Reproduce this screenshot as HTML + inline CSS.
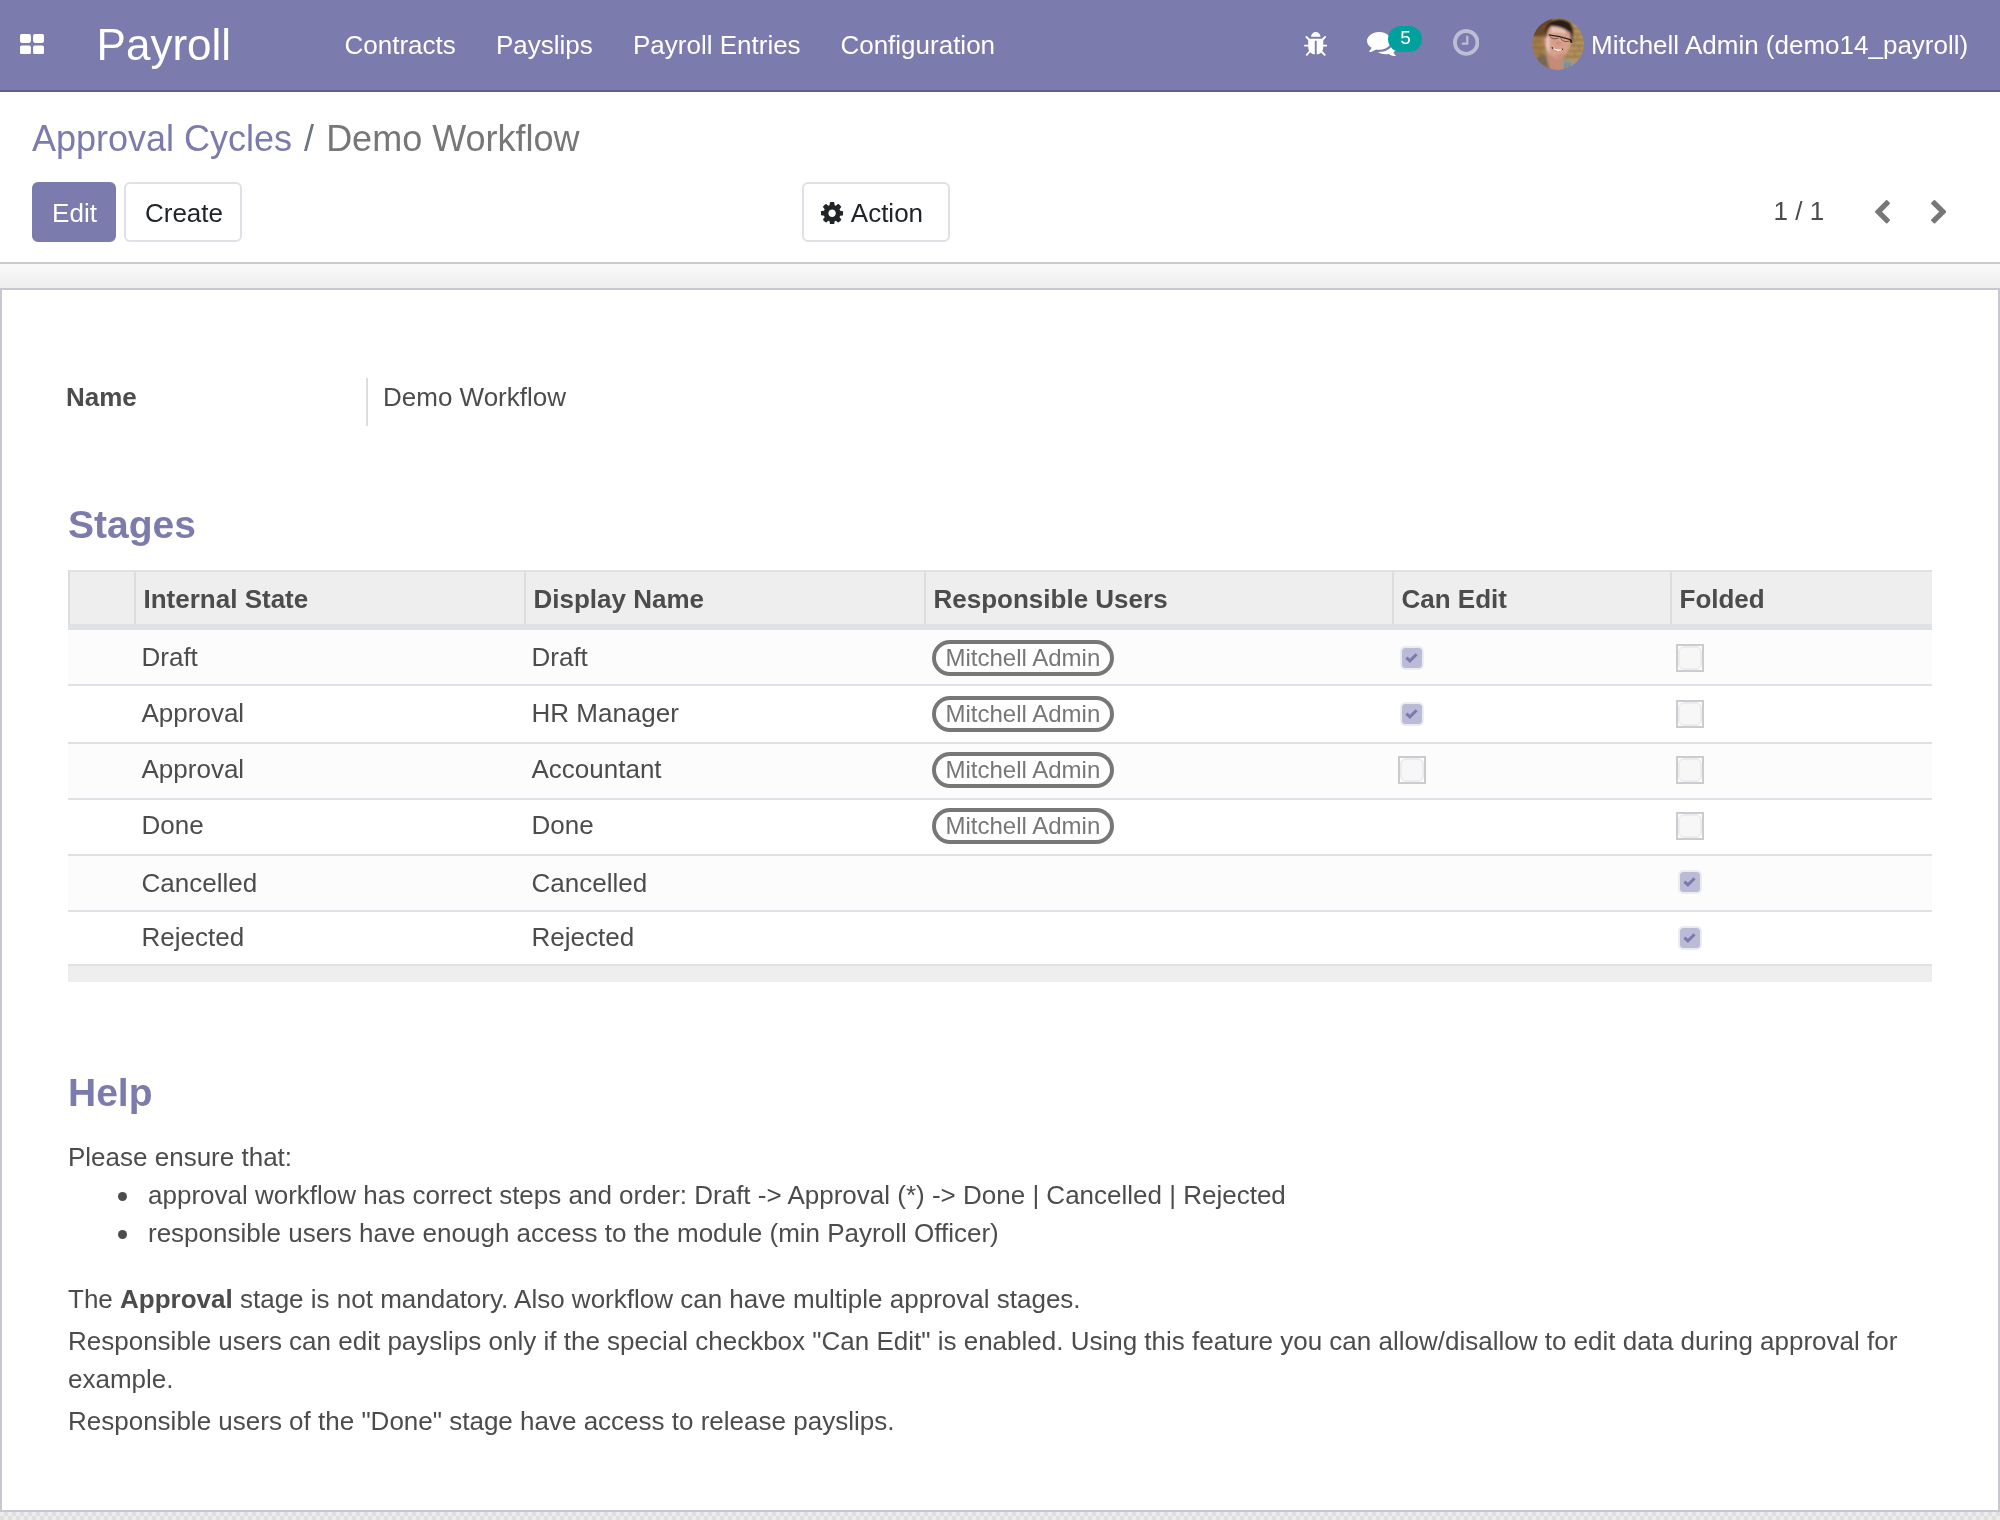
<!DOCTYPE html>
<html lang="en">
<head>
<meta charset="utf-8">
<title>Demo Workflow - Odoo</title>
<style>
*{box-sizing:border-box;margin:0;padding:0}
html,body{width:2000px;height:1520px;overflow:hidden}
body{font-family:"Liberation Sans",Arial,Helvetica,sans-serif;font-size:26px;line-height:1.5;color:#4c4c4c;background:#f0f0f0;position:relative;will-change:transform}
a{text-decoration:none;color:inherit}
svg{display:block}

/* ---------- navbar ---------- */
.navbar{position:absolute;left:0;top:0;width:2000px;height:92px;background:#7c7bad;border-bottom:2px solid #5f5e97;color:#fff}
.navbar .apps{position:absolute;left:20.2px;top:33.7px;width:24px;height:20.4px}
.navbar .brand{position:absolute;left:96.6px;top:0;height:90px;line-height:90px;font-size:44px;color:#fff;white-space:nowrap}
.navbar .menu{position:absolute;top:0;height:90px;line-height:90px;font-size:26px;color:#fff;white-space:nowrap}
.navbar .ico{position:absolute}
.navbar .badge{position:absolute;left:1388px;top:26px;width:34px;height:26px;border-radius:13px;background:#00a09d;color:#fff;font-size:19px;line-height:23px;text-align:center;padding-left:1px}
.navbar .avatar{position:absolute;left:1532px;top:18px;width:52px;height:52px;border-radius:50%;overflow:hidden}
.navbar .user{position:absolute;left:1591px;top:0;height:90px;line-height:90px;font-size:26px;white-space:nowrap}

/* ---------- control panel ---------- */
.cp{position:absolute;left:0;top:92px;width:2000px;height:172px;background:#fff;border-bottom:2px solid #cccccc}
.breadcrumb{position:absolute;left:32px;top:20px;font-size:36px;line-height:54px;white-space:nowrap;color:#777}
.breadcrumb a{color:#7c7bad}
.breadcrumb .sep{padding:0 12px 0 12px;color:#6c757d}
.btn{position:absolute;top:90px;height:60px;border-radius:6px;font-size:26px;line-height:58px;text-align:center;border:2px solid transparent;white-space:nowrap}
.btn-primary{left:32px;width:84px;padding-left:1px;background:#7c7bad;border-color:#7c7bad;color:#fff}
.btn-secondary{background:#fff;border-color:#dee2e6;color:#212529}
.btn-create{left:124px;width:118px;padding-left:2px}
.btn-action{left:802px;width:148px}
.btn-action svg{position:absolute;left:17px;top:17.5px}
.btn-action span{position:absolute;left:46.8px;top:0}
.pager{position:absolute;left:1773.5px;top:89px;height:60px;line-height:60px;font-size:26px;color:#4c4c4c;white-space:nowrap}
.pgbtn{position:absolute;top:108px}

/* ---------- sheet ---------- */
.strip{position:absolute;left:0;top:264px;width:2000px;height:24px;background:linear-gradient(#f9f9f9,#eeeeee)}
.botstrip{position:absolute;left:0;top:1512px;width:2000px;height:8px;background:repeating-conic-gradient(#dfdfdf 0% 25%,#ededed 0% 50%) 0 0/8px 8px}
.sheet{position:absolute;left:0;top:288px;width:2000px;height:1224px;background:#fff;border:2px solid #c8c8d3}
.lbl{position:absolute;left:64px;top:88px;font-weight:bold;line-height:39px;white-space:nowrap}
.vsep{position:absolute;left:364px;top:88px;width:2px;height:48px;background:#ddd}
.val{position:absolute;left:381px;top:88px;line-height:39px;white-space:nowrap}
h2{position:absolute;left:66px;font-size:39px;font-weight:bold;color:#7c7bad;line-height:48px;white-space:nowrap}

/* table */
table{position:absolute;left:66px;top:280px;width:1864px;border-collapse:separate;border-spacing:0;table-layout:fixed}
thead th{height:56px;background:#eee;text-align:left;font-weight:bold;padding:0 0 0 7.5px;border-left:2px solid #ddd;border-top:2px solid #dee2e6;border-bottom:2px solid #dee2e6;color:#4c4c4c;vertical-align:middle;line-height:38px;white-space:nowrap;padding-top:2px}
tbody td{padding:0 0 0 7.5px;border-bottom:2px solid #dee2e6;vertical-align:middle;position:relative;white-space:nowrap;line-height:38px}
tbody tr:first-child td{border-top:4px solid #dee2e6}
tbody tr:nth-child(odd) td{background:#fcfcfc}
tbody tr:nth-child(1) td{height:60px}
tbody tr:nth-child(2) td{height:58px;padding-bottom:2px}
tbody tr:nth-child(3) td{height:56px;padding-bottom:4px}
tbody tr:nth-child(4) td{height:56px;padding-bottom:4px}
tbody tr:nth-child(5) td{height:56px}
tbody tr:nth-child(6) td{height:54px;padding-bottom:2px}
tfoot td{height:16px;background:#eee}
.tag{position:relative;top:-1px;display:inline-block;height:36px;line-height:28px;border:4px solid #777;border-radius:18px;padding:0 10px;font-size:24px;color:#777;background:#fff;vertical-align:middle}
.cb{position:absolute;display:block}
.cb.on{left:8px;width:24px;height:24px;border-radius:5.5px;background:#bcbbd7;border:2px solid #e9ecf0}
.cb.on svg{position:absolute;left:2.8px;top:3.5px}
.cb.off{left:6px;width:28px;height:28px;border:2px solid #ccc;background:#fff}
.cb.off i{position:absolute;left:0;top:0;width:24px;height:24px;border-radius:6px;background:#f7f7f7;border:2px solid #e9ecf0}

/* help */
.help p,.help li{line-height:38px}
.help{position:absolute;left:66px;top:848px;width:1864px}
.help ul{margin:0 0 28px 0;padding-left:80px;list-style:none}
.help li{position:relative}
.help li::before{content:"";position:absolute;left:-30.3px;top:16px;width:9px;height:9px;border-radius:50%;background:#4c4c4c}
.help .p2{line-height:38px;margin-bottom:4px}
</style>
</head>
<body>

<div class="navbar">
  <svg class="apps" viewBox="0 0 24 20.4"><g fill="#fff"><rect x="0" y="0" width="10.9" height="8.9" rx="1.8"/><rect x="13.1" y="0" width="10.9" height="8.9" rx="1.8"/><rect x="0" y="11.5" width="10.9" height="8.9" rx="1.8"/><rect x="13.1" y="11.5" width="10.9" height="8.9" rx="1.8"/></g></svg>
  <a class="brand">Payroll</a>
  <a class="menu" style="left:344.5px">Contracts</a>
  <a class="menu" style="left:496px">Payslips</a>
  <a class="menu" style="left:633px">Payroll Entries</a>
  <a class="menu" style="left:840.4px">Configuration</a>

  <svg class="ico" style="left:1303.8px;top:32.2px" width="23.5" height="23.8" viewBox="96 64 1600 1568" preserveAspectRatio="none"><path fill="#fff" d="M1696 960q0 26-19 45t-45 19h-224q0 171-67 290l208 209q19 19 19 45t-19 45q-18 19-45 19t-45-19l-198-197q-5 5-15 13t-42 28.500-65 36.500-82 29-97 13v-896h-128v896q-51 0-101.500-13.500t-87-33-66-39-43.500-32.500l-15-14-183 207q-20 21-48 21-24 0-43-16-19-18-20.500-44.500t15.500-46.500l202-227q-58-114-58-274h-224q-26 0-45-19t-19-45 19-45 45-19h224v-294l-173-173q-19-19-19-45t19-45 45-19 45 19l173 173h844l173-173q19-19 45-19t45 19 19 45-19 45l-173 173v294h224q26 0 45 19t19 45zm-480-576h-640q0-133 93.500-226.500t226.500-93.500 226.500 93.500 93.500 226.500z"/></svg>

  <svg class="ico" style="left:1367px;top:31.8px" width="31" height="24.4" viewBox="0 256 1792 1408" preserveAspectRatio="none"><path fill="#fff" d="M1408 768q0 139-94 257t-256.500 186.500-353.500 68.500q-86 0-176-16-124 88-278 128-36 9-86 16h-3q-11 0-20.500-8t-11.500-21q-1-3-1-6.500t.500-6.500 2-6l2.500-5 3.500-5.500 4-5 4.500-5 4-4.500q5-6 23-25t26-29.500 22.500-29 25-38.500 20.500-44q-124-72-195-177t-71-224q0-139 94-257t256.500-186.500 353.500-68.500 353.500 68.500 256.500 186.500 94 257zm384 256q0 120-71 224.500t-195 176.500q10 24 20.500 44t25 38.500 22.500 29 26 29.500 23 25q1 1 4 4.500t4.500 5 4 5 3.500 5.500l2.500 5 2 6 .500 6.500-1 6.500q-3 14-13 22t-22 7q-50-7-86-16-154-40-278-128-90 16-176 16-271 0-472-132 58 4 88 4 161 0 309-45t264-129q125-92 192-212t67-254q0-77-23-152 129 71 204 178t75 230z"/></svg>
  <span class="badge">5</span>

  <svg class="ico" style="left:1452.8px;top:29.2px;opacity:.5" width="26.4" height="26.8" viewBox="128 128 1536 1536" preserveAspectRatio="none"><path fill="#fff" d="M1024 544v448q0 14-9 23t-23 9h-320q-14 0-23-9t-9-23v-64q0-14 9-23t23-9h224v-352q0-14 9-23t23-9h64q14 0 23 9t9 23zm416 352q0-148-73-273t-198-198-273-73-273 73-198 198-73 273 73 273 198 198 273 73 273-73 198-198 73-273zm224 0q0 209-103 385.500t-279.500 279.500-385.500 103-385.500-103-279.500-279.500-103-385.500 103-385.500 279.500-279.500 385.500-103 385.500 103 279.500 279.500 103 385.500z"/></svg>

  <div class="avatar">
    <svg width="52" height="52" viewBox="0 0 52 52">
      <defs><filter id="bl" x="-10%" y="-10%" width="120%" height="120%"><feGaussianBlur stdDeviation="1"/></filter>
      <filter id="bl2" x="-10%" y="-10%" width="120%" height="120%"><feGaussianBlur stdDeviation="0.55"/></filter>
      <clipPath id="cc"><circle cx="26" cy="26" r="26"/></clipPath></defs>
      <g clip-path="url(#cc)"><g filter="url(#bl)">
      <rect x="-4" y="-4" width="60" height="60" fill="#ac8a58"/>
      <rect x="36" y="6" width="20" height="40" fill="#b4935f"/>
      <path d="M-2 -2 L22 -2 L15 10 L12 18 L-2 18 Z" fill="#6a4626"/>
      <path d="M-2 18 L12 18 L12 38 L-2 38 Z" fill="#a27c4a"/>
      <path d="M0 19 H12 M0 23.5 H12 M0 29.8 H13 M0 36 H12 M38 16 H52 M39 21.8 H52 M38 27.7 H52 M36 33 H52 M34 38.6 H52 M36 10.5 H50" stroke="#85643a" stroke-width="1.2" fill="none"/>
      <path d="M6 19 V23.5 M3 23.5 V29.8 M8 29.8 V36 M45 16 V21.8 M42 21.8 V27.7 M47 27.7 V33 M43 33 V38.6" stroke="#8d6c40" stroke-width="1" fill="none"/>
      <path d="M-2 54 L2 42 Q8 35.5 14 37 L18 54 Z" fill="#786852"/>
      <path d="M27 54 L29 42.5 Q37 40.5 45 46 L40 54 Z" fill="#8b9b9b"/>
      <path d="M34 44 L33 52 M38 45 L36.5 51" stroke="#5f6b6b" stroke-width="1" fill="none"/>
      <path d="M14.5 34 Q15 46 20 54 L30 54 Q31.5 46 31 38 Z" fill="#c48c78"/>
      <path d="M13.2 22 Q12.5 12 19 8 Q28 6 38 13 Q39.5 22 38 28 Q35 38 26 40.5 Q18 39 15 33 Z" fill="#d8a08c"/>
      <path d="M13.6 19 Q15 17 17.5 19 L17.5 36 Q14.5 32 13.6 26 Z" fill="#e6c8c2"/>
      <ellipse cx="12" cy="24" rx="1.6" ry="3.8" fill="#c67a52"/>
      <path d="M19 9 Q27 7.5 34 11.5 L33 16 Q26 13 19.5 15 Z" fill="#e9c3b8"/>
      <path d="M13.5 21 Q11.5 8 20 2.5 Q30 -1.5 38 4.5 Q42.5 10 41 18 Q40.8 22 39.6 24.5 L38.2 15 Q30 8.5 19.5 8 Q15 11 14.8 18 Z" fill="#2c1d18"/>
      <path d="M20 36 Q26 39.5 32 35 Q28 42 20 36 Z" fill="#b07a64"/>
      <path d="M24 24 Q27 27 29 25" stroke="#b87860" stroke-width="1.2" fill="none"/>
      </g>
      <g filter="url(#bl2)">
      <path d="M16.7 16.8 L27.5 18.6 L38.4 21.6" stroke="#2a211e" stroke-width="1.3" fill="none"/>
      <path d="M38.3 21.2 L39.6 24.8" stroke="#1e1816" stroke-width="1.8" fill="none"/>
      <path d="M17.5 18 Q21 22.5 26.5 20 M28.5 20.5 Q32 25 37.5 23" stroke="#6a4a3c" stroke-width="0.9" fill="none"/>
      <path d="M20 29.6 Q25 32.6 30.8 31 Q25.5 35.4 20 29.6 Z" fill="#fbf4ee"/>
      <path d="M19.8 29.4 L21 30.6 M30 31.4 L31 30.9" stroke="#2a1412" stroke-width="1.1" fill="none"/>
      </g></g>
    </svg>
  </div>
  <span class="user">Mitchell Admin (demo14_payroll)</span>
</div>

<div class="cp">
  <div class="breadcrumb"><a>Approval Cycles</a><span class="sep">/</span><span>Demo Workflow</span></div>
  <a class="btn btn-primary">Edit</a>
  <a class="btn btn-secondary btn-create">Create</a>
  <a class="btn btn-secondary btn-action"><svg width="22.2" height="22.5" viewBox="128 128 1536 1536" preserveAspectRatio="none"><path fill="#212529" d="M1152 896q0-106-75-181t-181-75-181 75-75 181 75 181 181 75 181-75 75-181zm512-109v222q0 12-8 23t-20 13l-185 28q-19 54-39 91 35 50 107 138 10 12 10 25t-9 23q-27 37-99 108t-94 71q-12 0-26-9l-138-108q-44 23-91 38-16 136-29 186-7 28-36 28h-222q-14 0-24.500-8.500t-11.500-21.500l-28-184q-49-16-90-37l-141 107q-10 9-25 9-14 0-25-11-126-114-165-168-7-10-7-23 0-12 8-23 15-21 51-66.500t54-70.500q-27-50-41-99l-183-27q-13-2-21-12.500t-8-23.500v-222q0-12 8-23t19-13l186-28q14-46 39-92-40-57-107-138-10-12-10-24 0-10 9-23 26-36 98.500-107.500t94.500-71.500q13 0 26 10l138 107q44-23 91-38 16-136 29-186 7-28 36-28h222q14 0 24.500 8.500t11.500 21.500l28 184q49 16 90 37l142-107q9-9 24-9 13 0 25 10 129 119 165 170 7 8 7 22 0 12-8 23-15 21-51 66.500t-54 70.500q26 50 41 98l183 28q13 2 21 12.500t8 23.500z"/></svg><span>Action</span></a>
  <span class="pager">1 / 1</span>
  <svg class="pgbtn" style="left:1875px" width="15" height="23.5" viewBox="410 26 1036 1612" preserveAspectRatio="none"><path fill="#777" d="M1427 301l-531 531 531 531q19 19 19 45t-19 45l-166 166q-19 19-45 19t-45-19l-742-742q-19-19-19-45t19-45l742-742q19-19 45-19t45 19l166 166q19 19 19 45t-19 45z"/></svg>
  <svg class="pgbtn" style="left:1930.5px" width="15.5" height="23.5" viewBox="346 26 1036 1612" preserveAspectRatio="none"><path fill="#777" d="M1363 877l-742 742q-19 19-45 19t-45-19l-166-166q-19-19-19-45t19-45l531-531-531-531q-19-19-19-45t19-45l166-166q19-19 45-19t45 19l742 742q19 19 19 45t-19 45z"/></svg>
</div>

<div class="strip"></div>
<div class="botstrip"></div>
<div class="sheet">
  <span class="lbl">Name</span>
  <i class="vsep"></i>
  <span class="val">Demo Workflow</span>

  <h2 style="top:211px">Stages</h2>

  <table>
    <colgroup><col style="width:66px"><col style="width:390px"><col style="width:400px"><col style="width:468px"><col style="width:278px"><col style="width:262px"></colgroup>
    <thead><tr><th></th><th>Internal State</th><th>Display Name</th><th>Responsible Users</th><th>Can Edit</th><th>Folded</th></tr></thead>
    <tbody>
      <tr><td></td><td>Draft</td><td>Draft</td><td><span class="tag">Mitchell Admin</span></td><td><span class="cb on" style="top:16px"><svg width="13" height="11" viewBox="0 0 13 11"><path d="M1.4 5.6 L4.9 8.9 L11.6 2.2" stroke="#7b7aae" stroke-width="2.9" fill="none"/></svg></span></td><td><span class="cb off" style="top:14px"><i></i></span></td></tr>
      <tr><td></td><td>Approval</td><td>HR Manager</td><td><span class="tag">Mitchell Admin</span></td><td><span class="cb on" style="top:16px"><svg width="13" height="11" viewBox="0 0 13 11"><path d="M1.4 5.6 L4.9 8.9 L11.6 2.2" stroke="#7b7aae" stroke-width="2.9" fill="none"/></svg></span></td><td><span class="cb off" style="top:14px"><i></i></span></td></tr>
      <tr><td></td><td>Approval</td><td>Accountant</td><td><span class="tag">Mitchell Admin</span></td><td><span class="cb off" style="top:12px"><i></i></span></td><td><span class="cb off" style="top:12px"><i></i></span></td></tr>
      <tr><td></td><td>Done</td><td>Done</td><td><span class="tag">Mitchell Admin</span></td><td></td><td><span class="cb off" style="top:12px"><i></i></span></td></tr>
      <tr><td></td><td>Cancelled</td><td>Cancelled</td><td></td><td></td><td><span class="cb on" style="top:14px"><svg width="13" height="11" viewBox="0 0 13 11"><path d="M1.4 5.6 L4.9 8.9 L11.6 2.2" stroke="#7b7aae" stroke-width="2.9" fill="none"/></svg></span></td></tr>
      <tr><td></td><td>Rejected</td><td>Rejected</td><td></td><td></td><td><span class="cb on" style="top:14px"><svg width="13" height="11" viewBox="0 0 13 11"><path d="M1.4 5.6 L4.9 8.9 L11.6 2.2" stroke="#7b7aae" stroke-width="2.9" fill="none"/></svg></span></td></tr>
    </tbody>
    <tfoot><tr><td colspan="6"></td></tr></tfoot>
  </table>

  <h2 style="top:779px">Help</h2>
  <div class="help">
    <p>Please ensure that:</p>
    <ul>
      <li>approval workflow has correct steps and order: Draft -&gt; Approval (*) -&gt; Done | Cancelled | Rejected</li>
      <li>responsible users have enough access to the module (min Payroll Officer)</li>
    </ul>
    <p class="p2">The <b>Approval</b> stage is not mandatory. Also workflow can have multiple approval stages.</p>
    <p class="p2">Responsible users can edit payslips only if the special checkbox "Can Edit" is enabled. Using this feature you can allow/disallow to edit data during approval for example.</p>
    <p class="p2">Responsible users of the "Done" stage have access to release payslips.</p>
  </div>
</div>

</body>
</html>
